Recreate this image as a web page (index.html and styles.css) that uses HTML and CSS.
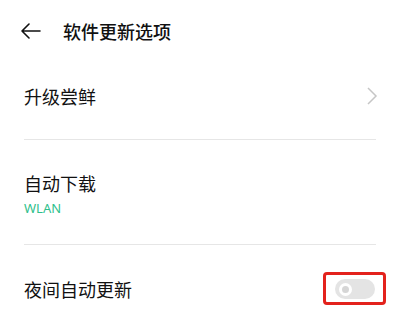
FILE: index.html
```html
<!DOCTYPE html>
<html lang="zh-CN">
<head>
<meta charset="utf-8">
<link rel="stylesheet" href="styles.css">
</head>
<body>
<div class="page">
  <header class="bar">
    <svg class="back" width="20" height="16" viewBox="0 0 20 16"><path d="M1 8H19M8 1L1 8L8 15" fill="none" stroke="#111" stroke-width="1.6" stroke-linecap="round" stroke-linejoin="round"/></svg>
    <h1 class="title">软件更新选项</h1>
  </header>
  <div class="item item-first">
    <span class="label">升级尝鲜</span>
    <svg class="chev" width="12" height="18" viewBox="0 0 12 18"><path d="M2 1L10 9L2 17" fill="none" stroke="#c6c6c6" stroke-width="1.5"/></svg>
  </div>
  <div class="item item-second">
    <div class="stack">
      <span class="label">自动下载</span>
      <span class="sub">WLAN</span>
    </div>
  </div>
  <div class="item item-third">
    <span class="label">夜间自动更新</span>
    <div class="switch-wrap">
      <div class="switch"><span class="knob"></span></div>
      <div class="highlight"></div>
    </div>
  </div>
</div>
</body>
</html>
```
FILE: styles.css
```css
html, body {
  margin: 0;
  padding: 0;
  background: #fff;
}
body {
  font-family: "Noto Sans CJK SC", "Noto Sans", sans-serif;
  color: #111;
}
.page {
  width: 399px;
  height: 320px;
  overflow: hidden;
}
.bar {
  height: 62px;
  display: flex;
  align-items: center;
  padding-left: 21px;
}
.back {
  display: block;
}
.title {
  margin: 0 0 0 22px;
  font-size: 18px;
  font-weight: 500;
  line-height: 24px;
}
.item {
  margin: 0 23px 0 24px;
  display: flex;
  align-items: center;
  justify-content: space-between;
}
.item-first {
  padding: 22px 0 31px;
  border-bottom: 1px solid #e6e6e6;
}
.item-second {
  padding: 31px 0 27px;
  border-bottom: 1px solid #e6e6e6;
}
.item-third {
  padding: 32px 0 0;
}
.label {
  font-size: 18px;
  line-height: 24px;
}
.stack {
  display: flex;
  flex-direction: column;
}
.sub {
  margin-top: 4px;
  font-family: "Noto Sans", sans-serif;
  font-size: 13px;
  line-height: 18px;
  color: #2fbf8c;
}
.chev {
  display: block;
  margin-right: -2px;
}
.switch-wrap {
  position: relative;
  margin-right: 1px;
}
.switch {
  width: 40px;
  height: 20px;
  border-radius: 10px;
  background: #e4e4e4;
  display: flex;
  align-items: center;
  padding-left: 4px;
  box-sizing: border-box;
}
.knob {
  width: 13px;
  height: 13px;
  border-radius: 50%;
  border: 3px solid #fff;
  background: #d6d6d6;
  box-sizing: border-box;
}
.highlight {
  position: absolute;
  left: -12px;
  top: -7px;
  width: 63px;
  height: 33px;
  border: 3px solid #e3221c;
  border-radius: 4px;
  box-sizing: border-box;
}
```
